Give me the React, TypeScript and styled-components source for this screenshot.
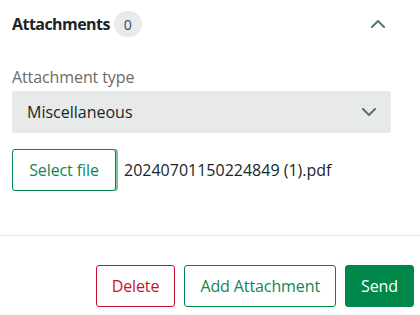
import React from 'react';
import styled, { createGlobalStyle } from 'styled-components';

const GlobalStyle = createGlobalStyle`
  html, body {
    margin: 0;
    padding: 0;
    background: #ffffff;
    font-family: 'Open Sans', 'Noto Sans', Arial, sans-serif;
    color: #212529;
  }
`;

const Panel = styled.div`
  width: 420px;
  height: 315px;
  display: flex;
  flex-direction: column;
  overflow: hidden;
`;

const Body = styled.div`
  padding: 0 29px 0 12px;
  display: flex;
  flex-direction: column;
`;

const Header = styled.div`
  height: 48px;
  display: flex;
  align-items: center;
  justify-content: space-between;
`;

const TitleGroup = styled.div`
  display: flex;
  align-items: center;
  gap: 4px;
`;

const Title = styled.h2`
  margin: 0;
  font-size: 16px;
  font-weight: 700;
  letter-spacing: -0.55px;
  color: #1f2328;
`;

const Badge = styled.span`
  min-width: 28px;
  height: 26px;
  border-radius: 13px;
  background: #e8ebea;
  color: #2c4a66;
  font-size: 14px;
  display: inline-flex;
  align-items: center;
  justify-content: center;
`;

const Toggle = styled.button`
  background: none;
  border: 0;
  padding: 0;
  margin-right: 6px;
  width: 14px;
  height: 14px;
  display: flex;
  align-items: center;
  justify-content: center;
  color: #56766b;
  cursor: pointer;
`;

const Label = styled.label`
  margin-top: 17px;
  font-size: 16px;
  color: #6a6a6a;
  line-height: 24px;
  letter-spacing: -0.1px;
`;

const Select = styled.div`
  margin-top: 2px;
  height: 42px;
  border-radius: 3px;
  background: #e7eae9;
  display: flex;
  align-items: center;
  justify-content: space-between;
  padding: 0 15px 0 15px;
  font-size: 16px;
`;

const FileRow = styled.div`
  margin-top: 16px;
  display: flex;
  align-items: center;
  gap: 8px;
`;

const Button = styled.button<{ $tone: 'danger' | 'outline' | 'solid' }>`
  height: 42px;
  padding: 0 15px;
  border-radius: 3px;
  font-family: inherit;
  font-size: 16px;
  letter-spacing: -0.1px;
  cursor: pointer;
  background: ${p => (p.$tone === 'solid' ? '#00884a' : '#ffffff')};
  color: ${p => (p.$tone === 'danger' ? '#c8102e' : p.$tone === 'solid' ? '#ffffff' : '#128553')};
  border: 1px solid ${p => (p.$tone === 'danger' ? '#c8102e' : '#00884a')};
`;

const SelectFile = styled(Button)`
  width: 104px;
  padding: 0;
  box-shadow: 2px 0 0 #7cc79c;
`;

const FileName = styled.span`
  font-size: 16px;
  color: #212529;
`;

const Divider = styled.hr`
  margin: 44px 0 0;
  border: 0;
  border-top: 1px solid #e6e6e6;
`;

const Footer = styled.div`
  display: flex;
  justify-content: flex-end;
  gap: 9px;
  padding: 29px 6px 0 0;
`;

const Chevron = ({ up }: { up?: boolean }) => (
  <svg width="14" height="8" viewBox="0 0 14 8" fill="none">
    <path
      d={up ? 'M1 7 L7 1 L13 7' : 'M1 1 L7 7 L13 1'}
      stroke="currentColor"
      strokeWidth="2"
      strokeLinecap="square"
    />
  </svg>
);

const SelectIcon = styled.span`
  color: #56766b;
  display: flex;
`;

export default function App() {
  return (
    <>
      <GlobalStyle />
      <Panel>
        <Body>
          <Header>
            <TitleGroup>
              <Title>Attachments</Title>
              <Badge>0</Badge>
            </TitleGroup>
            <Toggle aria-label="Collapse">
              <Chevron up />
            </Toggle>
          </Header>
          <Label>Attachment type</Label>
          <Select>
            <span>Miscellaneous</span>
            <SelectIcon>
              <Chevron />
            </SelectIcon>
          </Select>
          <FileRow>
            <SelectFile $tone="outline">Select file</SelectFile>
            <FileName>20240701150224849 (1).pdf</FileName>
          </FileRow>
        </Body>
        <Divider />
        <Footer>
          <Button $tone="danger">Delete</Button>
          <Button $tone="outline">Add Attachment</Button>
          <Button $tone="solid">Send</Button>
        </Footer>
      </Panel>
    </>
  );
}
